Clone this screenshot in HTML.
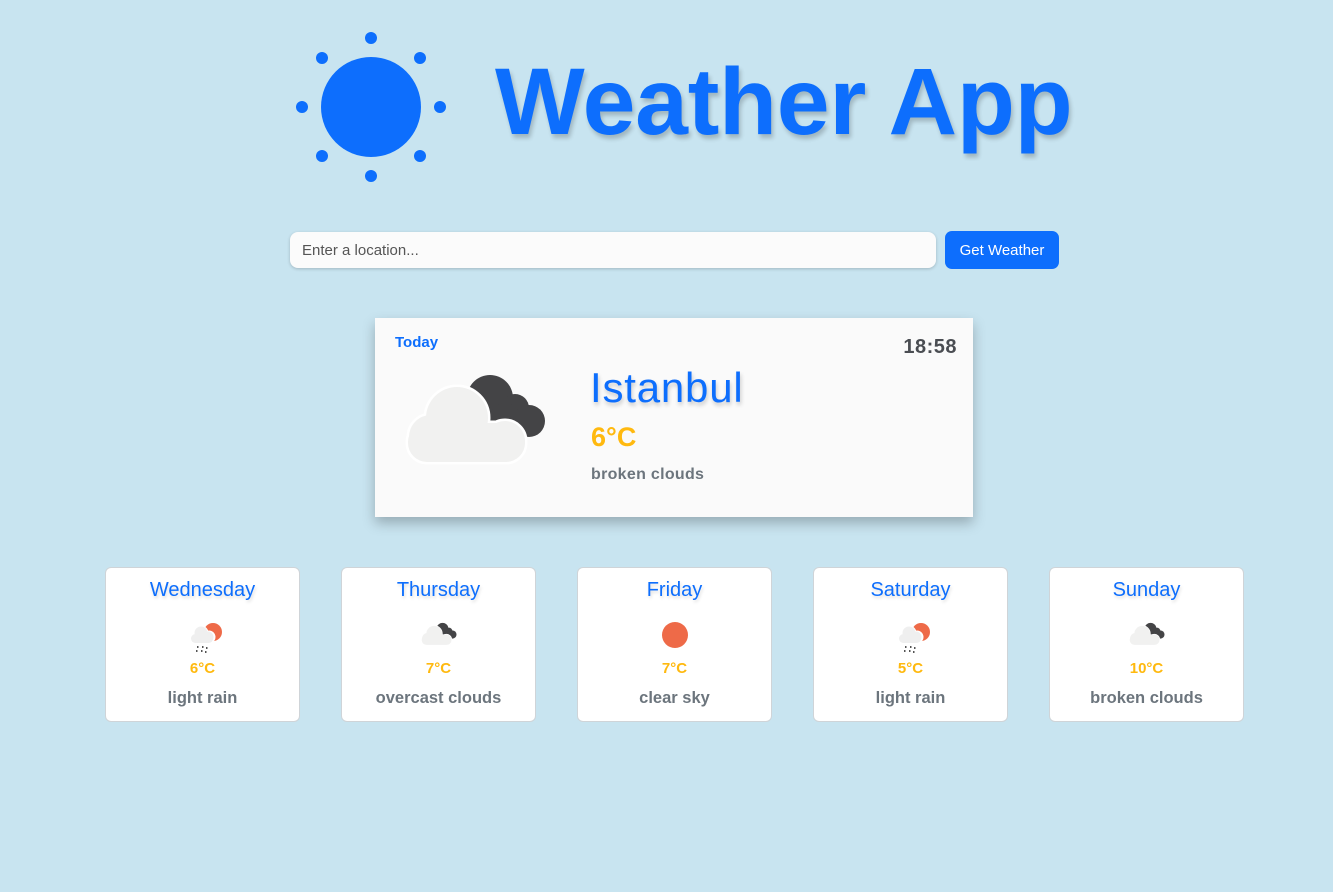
<!DOCTYPE html>
<html><head><meta charset="utf-8"><style>
*{box-sizing:border-box;margin:0;padding:0}
body{width:1333px;height:892px;background:#c8e4f0;font-family:"Liberation Sans",sans-serif;position:relative;overflow:hidden}
.abs{position:absolute}
h1{position:absolute;left:495px;top:37px;font-size:95px;font-weight:bold;color:#0d6efd;text-shadow:2px 4px 4px rgba(0,0,0,.2);letter-spacing:-0.3px;white-space:nowrap;line-height:130px}
.inp{left:290px;top:232px;width:646px;height:36px;background:#fbfbfb;border-radius:8px;box-shadow:0 1px 3px rgba(0,0,0,.2);font-size:15px;color:#555;padding:10px 12px}
.btn{left:945px;top:231px;width:114px;height:38px;background:#0d6efd;border-radius:7px;color:#fff;font-size:15px;text-align:center;line-height:39px}
.today{left:375px;top:318px;width:598px;height:199px;background:#fafafa;box-shadow:0 6px 12px rgba(0,0,0,.25)}
.card{top:567px;width:195px;height:155px;background:#fff;border:1px solid #cfd4d8;border-radius:6px;text-align:center}
.card .d{margin-top:11px;font-size:20px;color:#0d6efd;text-shadow:1px 2px 3px rgba(0,0,0,.15)}
.card .t{position:absolute;top:92px;width:100%;font-size:15px;font-weight:bold;color:#ffb90f}
.card .s{position:absolute;top:121px;width:100%;font-size:16.5px;font-weight:bold;color:#6c757d}
.card svg{position:absolute;left:80px;top:50px}
</style></head><body>
<svg class="abs" style="left:290px;top:26px" width="162" height="162" viewBox="0 0 162 162">
<circle cx="81" cy="81" r="50" fill="#0d6efd"/>
<g fill="#0d6efd"><circle cx="81" cy="12" r="6"/><circle cx="81" cy="150" r="6"/><circle cx="12" cy="81" r="6"/><circle cx="150" cy="81" r="6"/><circle cx="32" cy="32" r="6"/><circle cx="130" cy="32" r="6"/><circle cx="32" cy="130" r="6"/><circle cx="130" cy="130" r="6"/></g></svg>
<h1>Weather App</h1>
<div class="abs inp">Enter a location...</div>
<div class="abs btn">Get Weather</div>

<svg width="0" height="0" style="position:absolute"><defs>
<g id="cl">
<g fill="#444446"><circle cx="85" cy="25" r="23"/><circle cx="110" cy="35" r="14"/><circle cx="124" cy="48" r="16"/><circle cx="100" cy="45" r="15"/></g>
<g fill="#f6f6f5" stroke="#fff" stroke-width="5"><circle cx="52" cy="45" r="31"/><circle cx="26" cy="64" r="22"/><circle cx="100" cy="68" r="20"/><rect x="3" y="50" width="117" height="39" rx="19"/></g>
<g fill="#f1f1f0"><circle cx="52" cy="45" r="31"/><circle cx="26" cy="64" r="22"/><circle cx="100" cy="68" r="20"/><rect x="3" y="50" width="117" height="39" rx="19"/></g>
</g>
<g id="rn">
<circle cx="25" cy="12" r="9" fill="#ee6a48"/>
<g fill="#fff"><circle cx="13" cy="13" r="7.5"/><circle cx="21" cy="17" r="6.5"/><rect x="2" y="13" width="24" height="11" rx="5.5"/></g>
<g fill="#efefef"><circle cx="13" cy="13" r="6.5"/><circle cx="20" cy="17" r="5.5"/><rect x="3" y="14" width="22" height="9" rx="4.5"/></g>
<g fill="#555"><rect x="9" y="26" width="1.5" height="2"/><rect x="14" y="26" width="1.5" height="2"/><rect x="18" y="27" width="1.5" height="2"/><rect x="8" y="30" width="1.5" height="2"/><rect x="13" y="30" width="1.5" height="2"/><rect x="17" y="31" width="1.5" height="2"/></g>
</g>
</defs></svg>

<div class="abs today">
<div class="abs" style="left:20px;top:16px;font-size:15px;font-weight:bold;color:#0d6efd">Today</div>
<div class="abs" style="right:16px;top:18px;font-size:20px;font-weight:bold;color:#4a4d52;letter-spacing:0.5px">18:58</div>
<svg class="abs" style="left:30px;top:55px" width="142" height="92" viewBox="0 0 142 92"><use href="#cl"/></svg>
<div class="abs" style="left:215px;top:46px;font-size:42px;letter-spacing:0.8px;color:#0d6efd;text-shadow:1px 3px 4px rgba(0,0,0,.2)">Istanbul</div>
<div class="abs" style="left:216px;top:104px;font-size:27px;font-weight:bold;color:#ffb90f">6°C</div>
<div class="abs" style="left:216px;top:148px;font-size:16px;font-weight:bold;color:#6c757d;letter-spacing:0.3px">broken clouds</div>
</div>

<div class="abs card" style="left:105px"><div class="d">Wednesday</div><svg width="36" height="36" viewBox="0 0 36 36" style="left:82px;top:52px"><use href="#rn"/></svg><div class="t">6°C</div><div class="s">light rain</div></div>
<div class="abs card" style="left:341px"><div class="d">Thursday</div><svg width="36" height="24" viewBox="0 0 142 92" style="left:79px;top:54px"><use href="#cl"/></svg><div class="t">7°C</div><div class="s">overcast clouds</div></div>
<div class="abs card" style="left:577px"><div class="d">Friday</div><svg width="28" height="28" viewBox="0 0 28 28" style="left:83px;top:53px"><circle cx="14" cy="14" r="13" fill="#ee6a48"/></svg><div class="t">7°C</div><div class="s">clear sky</div></div>
<div class="abs card" style="left:813px"><div class="d">Saturday</div><svg width="36" height="36" viewBox="0 0 36 36" style="left:82px;top:52px"><use href="#rn"/></svg><div class="t">5°C</div><div class="s">light rain</div></div>
<div class="abs card" style="left:1049px"><div class="d">Sunday</div><svg width="36" height="24" viewBox="0 0 142 92" style="left:79px;top:54px"><use href="#cl"/></svg><div class="t">10°C</div><div class="s">broken clouds</div></div>
</body></html>
